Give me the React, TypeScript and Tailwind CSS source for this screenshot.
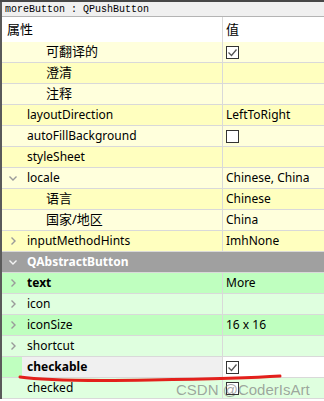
import React from 'react'

type Row = {
    name: string
    value?: string
    check?: boolean | null
    level: 0 | 1
    arrow?: 'right' | 'down'
    bg: string
    bold?: boolean
    current?: boolean
}

const Y1 = 'bg-[#ffffdc]'
const Y2 = 'bg-[#ffffbf]'
const G1 = 'bg-[#bfffbf]'
const G2 = 'bg-[#dfffdf]'

const rows: Row[] = [
    { name: '可翻译的', level: 1, bg: Y1, check: true },
    { name: '澄清', level: 1, bg: Y2 },
    { name: '注释', level: 1, bg: Y1 },
    { name: 'layoutDirection', level: 0, bg: Y2, value: 'LeftToRight' },
    { name: 'autoFillBackground', level: 0, bg: Y1, check: false },
    { name: 'styleSheet', level: 0, bg: Y2 },
    { name: 'locale', level: 0, bg: Y1, arrow: 'down', value: 'Chinese, China' },
    { name: '语言', level: 1, bg: Y2, value: 'Chinese' },
    { name: '国家/地区', level: 1, bg: Y1, value: 'China' },
    { name: 'inputMethodHints', level: 0, bg: Y2, arrow: 'right', value: 'ImhNone' },
]

const rows2: Row[] = [
    { name: 'text', level: 0, bg: G1, arrow: 'right', bold: true, value: 'More' },
    { name: 'icon', level: 0, bg: G2, arrow: 'right' },
    { name: 'iconSize', level: 0, bg: G1, arrow: 'right', value: '16 x 16' },
    { name: 'shortcut', level: 0, bg: G2, arrow: 'right' },
    { name: 'checkable', level: 0, bg: G1, bold: true, current: true, check: true },
    { name: 'checked', level: 0, bg: G2, check: false },
]

function Arrow({ dir, color = '#9a9a9a' }: { dir: 'right' | 'down'; color?: string }) {
    return (
        <svg width="8" height="8" viewBox="0 0 8 8" className="shrink-0">
            {dir === 'right' ? (
                <polyline points="2.5,0.5 6,4 2.5,7.5" fill="none" stroke={color} strokeWidth="1.4" />
            ) : (
                <polyline points="0.5,2.5 4,6 7.5,2.5" fill="none" stroke={color} strokeWidth="1.4" />
            )}
        </svg>
    )
}

function Check({ on }: { on: boolean }) {
    return (
        <div className="w-[13px] h-[13px] border border-[#333] bg-white flex items-center justify-center">
            {on && (
                <svg width="11" height="11" viewBox="0 0 11 11">
                    <polyline points="1.5,5.5 4.5,8.5 9.5,2.5" fill="none" stroke="#555" strokeWidth="1.3" />
                </svg>
            )}
        </div>
    )
}

function PropRow({ r }: { r: Row }) {
    return (
        <div className={`flex h-[21px] border-b border-[#d9d9d9] ${r.bg}`}>
            <div className="w-[220px] flex items-center shrink-0">
                <div className="w-[20px] flex items-center justify-center pl-[1px] h-full">
                    {r.arrow && <Arrow dir={r.arrow} />}
                </div>
                <div
                    className={`flex-1 h-full flex items-center ${r.current ? 'bg-[#f0f0f0]' : ''} ${
                        r.level === 1 ? 'pl-[24px] text-[13px]' : 'pl-[5px]'
                    } ${r.bold ? 'font-bold' : ''}`}
                >
                    {r.name}
                </div>
            </div>
            <div
                className={`flex-1 h-full border-l border-[#d9d9d9] flex items-center pl-[3px] ${
                    r.current ? 'bg-white' : ''
                }`}
            >
                {r.check !== undefined && r.check !== null ? <Check on={r.check} /> : r.value}
            </div>
        </div>
    )
}

export default function App() {
    return (
        <div
            className="relative w-[324px] h-[401px] overflow-hidden bg-white text-[12px] text-black"
            style={{ fontFamily: '"Noto Sans", "Noto Sans CJK SC", sans-serif' }}
        >
            <div className="h-[2px] bg-[#474747]" />
            <div className="border-l-2 border-[#5a5a5a]">
                <div className="h-[15px] bg-[#f0f0f0] border-b border-[#b4b4b4] flex items-center pl-[3px] font-['Liberation_Mono',monospace] text-[10px]">
                    moreButton : QPushButton
                </div>
                <div className="flex h-[25px] bg-white text-[13px]">
                    <div className="w-[220px] flex items-center pl-[5px] shrink-0">属性</div>
                    <div className="flex-1 border-l border-[#d9d9d9] flex items-center pl-[3px]">值</div>
                </div>
                {rows.map((r) => (
                    <PropRow key={r.name} r={r} />
                ))}
                <div className="flex items-center h-[21px] border-b border-[#d9d9d9] bg-[#a0a0a0] text-white font-bold">
                    <div className="w-[20px] flex items-center justify-center pl-[1px]">
                        <Arrow dir="down" color="#f4f4f4" />
                    </div>
                    <div className="pl-[5px]">QAbstractButton</div>
                </div>
                {rows2.map((r) => (
                    <PropRow key={r.name} r={r} />
                ))}
            </div>

            <svg className="absolute left-0 top-0 pointer-events-none" width="324" height="401">
                <path
                    d="M20 377 C 40 380, 90 381, 150 380 S 250 378, 280 376"
                    fill="none"
                    stroke="#e3201c"
                    strokeWidth="3"
                    strokeLinecap="round"
                />
            </svg>
            <div className="absolute left-[176px] top-[379px] text-[15px] text-[#7f7f7f]/70 font-['Liberation_Sans',sans-serif] pointer-events-none">
                CSDN @CoderIsArt
            </div>
        </div>
    )
}
